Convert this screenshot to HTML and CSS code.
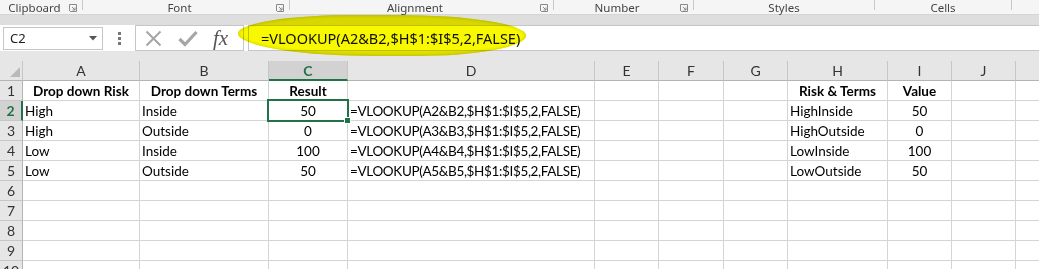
FILE: index.html
```html
<!DOCTYPE html>
<html lang="en">
<head>
  <meta charset="UTF-8">
  <title>VLOOKUP</title>
  <link rel="stylesheet" href="styles.css">
</head>
<body>
  <!-- ribbon group names -->
  <div class="ribbon-groups">
    <div class="group g-clipboard">
      <span class="group-label">Clipboard</span>
      <svg class="launcher" width="8" height="8" viewBox="0 0 8 8"><path d="M0.5 7V0.5H7.5V7.5H1" fill="none" stroke="#8a8a8a"/><path d="M3 3L6 6M6 3.5V6H3.5" fill="none" stroke="#8a8a8a"/></svg>
    </div>
    <div class="group g-font">
      <span class="group-label">Font</span>
      <svg class="launcher" width="8" height="8" viewBox="0 0 8 8"><path d="M0.5 7V0.5H7.5V7.5H1" fill="none" stroke="#8a8a8a"/><path d="M3 3L6 6M6 3.5V6H3.5" fill="none" stroke="#8a8a8a"/></svg>
    </div>
    <div class="group g-align">
      <span class="group-label">Alignment</span>
      <svg class="launcher" width="8" height="8" viewBox="0 0 8 8"><path d="M0.5 7V0.5H7.5V7.5H1" fill="none" stroke="#8a8a8a"/><path d="M3 3L6 6M6 3.5V6H3.5" fill="none" stroke="#8a8a8a"/></svg>
    </div>
    <div class="group g-number">
      <span class="group-label">Number</span>
      <svg class="launcher" width="8" height="8" viewBox="0 0 8 8"><path d="M0.5 7V0.5H7.5V7.5H1" fill="none" stroke="#8a8a8a"/><path d="M3 3L6 6M6 3.5V6H3.5" fill="none" stroke="#8a8a8a"/></svg>
    </div>
    <div class="group g-styles">
      <span class="group-label">Styles</span>
    </div>
    <div class="group g-cells">
      <span class="group-label">Cells</span>
    </div>
  </div>
  <div class="ribbon-band"></div>

  <!-- formula bar -->
  <div class="formula-bar">
    <div class="name-box">
      <span>C2</span>
      <svg class="drop" width="8" height="5" viewBox="0 0 8 5"><path d="M0 0H8L4 4.5Z" fill="#555"/></svg>
    </div>
    <svg class="grip" width="3" height="13" viewBox="0 0 3 13"><rect x="0" y="0" width="3" height="3" fill="#777"/><rect x="0" y="5" width="3" height="3" fill="#777"/><rect x="0" y="10" width="3" height="3" fill="#777"/></svg>
    <div class="fx-buttons">
      <svg width="17" height="17" viewBox="0 0 17 17"><path d="M1.5 1.5L15.5 15.5M15.5 1.5L1.5 15.5" stroke="#a6a6a6" stroke-width="2"/></svg>
      <svg width="20" height="17" viewBox="0 0 20 17"><path d="M1.5 9L7 14.5L18.5 2" fill="none" stroke="#a6a6a6" stroke-width="3.2"/></svg>
      <span class="fx">fx</span>
    </div>
    <div class="formula-input">=VLOOKUP(A2&amp;B2,$H$1:$I$5,2,FALSE)</div>
  </div>
  <div class="marker"></div>
  <div class="header-gap"></div>

  <!-- worksheet -->
  <div class="sheet">
    <div class="corner"><svg width="10" height="10" viewBox="0 0 10 10"><path d="M10 0V10H0Z" fill="#b9b9b9"/></svg></div>
    <div class="col-head">A</div>
    <div class="col-head">B</div>
    <div class="col-head active">C</div>
    <div class="col-head">D</div>
    <div class="col-head">E</div>
    <div class="col-head">F</div>
    <div class="col-head">G</div>
    <div class="col-head">H</div>
    <div class="col-head">I</div>
    <div class="col-head">J</div>
    <div class="col-head"></div>

    <div class="row-head">1</div>
    <div class="cell bold center">Drop down Risk</div>
    <div class="cell bold center">Drop down Terms</div>
    <div class="cell bold center">Result</div>
    <div class="cell"></div><div class="cell"></div><div class="cell"></div><div class="cell"></div>
    <div class="cell bold center">Risk &amp; Terms</div>
    <div class="cell bold center">Value</div>
    <div class="cell"></div><div class="cell"></div>

    <div class="row-head active">2</div>
    <div class="cell">High</div>
    <div class="cell">Inside</div>
    <div class="cell center selected">50</div>
    <div class="cell formula">=VLOOKUP(A2&amp;B2,$H$1:$I$5,2,FALSE)</div>
    <div class="cell"></div><div class="cell"></div><div class="cell"></div>
    <div class="cell">HighInside</div>
    <div class="cell center">50</div>
    <div class="cell"></div><div class="cell"></div>

    <div class="row-head">3</div>
    <div class="cell">High</div>
    <div class="cell">Outside</div>
    <div class="cell center">0</div>
    <div class="cell formula">=VLOOKUP(A3&amp;B3,$H$1:$I$5,2,FALSE)</div>
    <div class="cell"></div><div class="cell"></div><div class="cell"></div>
    <div class="cell">HighOutside</div>
    <div class="cell center">0</div>
    <div class="cell"></div><div class="cell"></div>

    <div class="row-head">4</div>
    <div class="cell">Low</div>
    <div class="cell">Inside</div>
    <div class="cell center">100</div>
    <div class="cell formula">=VLOOKUP(A4&amp;B4,$H$1:$I$5,2,FALSE)</div>
    <div class="cell"></div><div class="cell"></div><div class="cell"></div>
    <div class="cell">LowInside</div>
    <div class="cell center">100</div>
    <div class="cell"></div><div class="cell"></div>

    <div class="row-head">5</div>
    <div class="cell">Low</div>
    <div class="cell">Outside</div>
    <div class="cell center">50</div>
    <div class="cell formula">=VLOOKUP(A5&amp;B5,$H$1:$I$5,2,FALSE)</div>
    <div class="cell"></div><div class="cell"></div><div class="cell"></div>
    <div class="cell">LowOutside</div>
    <div class="cell center">50</div>
    <div class="cell"></div><div class="cell"></div>

    <div class="row-head">6</div>
    <div class="cell"></div><div class="cell"></div><div class="cell"></div><div class="cell"></div><div class="cell"></div><div class="cell"></div><div class="cell"></div><div class="cell"></div><div class="cell"></div><div class="cell"></div><div class="cell"></div>
    <div class="row-head">7</div>
    <div class="cell"></div><div class="cell"></div><div class="cell"></div><div class="cell"></div><div class="cell"></div><div class="cell"></div><div class="cell"></div><div class="cell"></div><div class="cell"></div><div class="cell"></div><div class="cell"></div>
    <div class="row-head">8</div>
    <div class="cell"></div><div class="cell"></div><div class="cell"></div><div class="cell"></div><div class="cell"></div><div class="cell"></div><div class="cell"></div><div class="cell"></div><div class="cell"></div><div class="cell"></div><div class="cell"></div>
    <div class="row-head">9</div>
    <div class="cell"></div><div class="cell"></div><div class="cell"></div><div class="cell"></div><div class="cell"></div><div class="cell"></div><div class="cell"></div><div class="cell"></div><div class="cell"></div><div class="cell"></div><div class="cell"></div>
    <div class="row-head">10</div>
    <div class="cell"></div><div class="cell"></div><div class="cell"></div><div class="cell"></div><div class="cell"></div><div class="cell"></div><div class="cell"></div><div class="cell"></div><div class="cell"></div><div class="cell"></div><div class="cell"></div>
  </div>
</body>
</html>
```

FILE: styles.css
```css
body {
  margin: 0;
  width: 1039px;
  height: 269px;
  overflow: hidden;
  background-color: #fff;
  font-family: 'Lato', 'Liberation Sans', sans-serif;
  position: relative;
}

/* ribbon */
.ribbon-groups {
  display: flex;
  height: 14px;
  background-color: #f5f5f5;
  border-bottom: 1px solid #d4d4d4;
  font-family: 'Noto Sans', sans-serif;
  font-size: 11.5px;
  color: #444;
}
.group {
  display: flex;
  align-items: center;
  box-sizing: border-box;
  border-right: 1px solid transparent;
  position: relative;
}
.group::after {
  content: '';
  position: absolute;
  right: -1px;
  top: 0;
  height: 10px;
  border-right: 1px solid #c8c8c8;
}
.group-label {
  flex: 1;
  text-align: center;
  line-height: 13px;
}
.launcher {
  margin-right: 5px;
  margin-top: 1px;
}
.g-clipboard { width: 83px; }
.g-font { width: 207px; }
.g-align { width: 264px; }
.g-number { width: 140px; }
.g-styles { width: 181px; }
.g-cells { width: 137px; }

.ribbon-band {
  height: 10px;
  background-color: #dedede;
}

/* formula bar */
.formula-bar {
  display: flex;
  align-items: center;
  height: 26px;
  background-color: #fff;
}
.name-box {
  box-sizing: border-box;
  width: 100px;
  height: 23px;
  margin-left: 3px;
  border: 1px solid #c6c6c6;
  display: flex;
  align-items: center;
  justify-content: space-between;
  padding: 0 5px 0 6px;
  font-family: 'Noto Sans', sans-serif;
  font-size: 13px;
  color: #222;
}
.drop { margin-top: 1px; }
.grip {
  margin-left: 15px;
}
.fx-buttons {
  box-sizing: border-box;
  width: 109px;
  height: 26px;
  margin-left: 14px;
  border: 1px solid #c6c6c6;
  display: flex;
  align-items: center;
  padding-left: 9px;
  gap: 16px;
}
.fx {
  font-family: 'Liberation Serif', serif;
  font-style: italic;
  font-size: 21px;
  color: #555;
  margin-left: -1px;
  line-height: 20px;
}
.formula-input {
  flex: 1;
  box-sizing: border-box;
  height: 26px;
  margin-left: 4px;
  border: 1px solid #c6c6c6;
  border-right: none;
  padding-left: 12px;
  font-family: 'Noto Sans', sans-serif;
  font-size: 14.5px;
  line-height: 24px;
  color: #111;
}

/* highlighter stroke on top of the formula bar */
.marker {
  position: absolute;
  left: 238px;
  top: 15px;
  width: 288px;
  height: 41px;
  border-radius: 40% 45% 38% 48% / 45% 50% 50% 55%;
  background-color: #f8f800;
  box-shadow: inset 0 0 3px 1px #d2d200;
  mix-blend-mode: multiply;
}

.header-gap {
  height: 10px;
  background-color: #e6e6e6;
}

/* worksheet grid */
.sheet {
  display: grid;
  grid-template-columns: 23px 117px 129px 79px 247px 64px 65px 64px 100px 64px 64px 64px;
  grid-auto-rows: 20px;
  font-size: 13.5px;
}
.corner,
.col-head,
.row-head,
.cell {
  box-sizing: border-box;
}
.corner {
  background-color: #e6e6e6;
  border-right: 1px solid #c6c6c6;
  border-bottom: 1px solid #b4b4b4;
  display: flex;
  align-items: flex-end;
  justify-content: flex-end;
  padding: 0 2px 3px 0;
}
.col-head {
  background-color: #e6e6e6;
  border-right: 1px solid #c6c6c6;
  border-bottom: 1px solid #b4b4b4;
  text-align: center;
  line-height: 19px;
  font-size: 14px;
  color: #333;
}
.col-head.active {
  background-color: #d2d2d2;
  border-bottom: 2px solid #217346;
  color: #217346;
  font-weight: bold;
}
.row-head {
  background-color: #e6e6e6;
  border-right: 1px solid #b4b4b4;
  border-bottom: 1px solid #c6c6c6;
  text-align: center;
  line-height: 19px;
  font-size: 14px;
  color: #333;
}
.row-head.active {
  background-color: #d2d2d2;
  border-right: 2px solid #217346;
  color: #217346;
  font-weight: bold;
}
.cell {
  border-right: 1px solid #d4d4d4;
  border-bottom: 1px solid #d4d4d4;
  padding: 1px 2px 0 2px;
  line-height: 19px;
  white-space: nowrap;
  color: #000;
}
.formula { letter-spacing: -0.35px; }
.bold { font-weight: bold; }
.center { text-align: center; }
.selected {
  position: relative;
}
.selected::before {
  content: '';
  position: absolute;
  left: -2px;
  top: -2px;
  right: -2px;
  bottom: -2px;
  border: 2px solid #217346;
}
.selected::after {
  content: '';
  position: absolute;
  right: -4px;
  bottom: -4px;
  width: 5px;
  height: 5px;
  background-color: #217346;
  border: 1px solid #fff;
}
```
